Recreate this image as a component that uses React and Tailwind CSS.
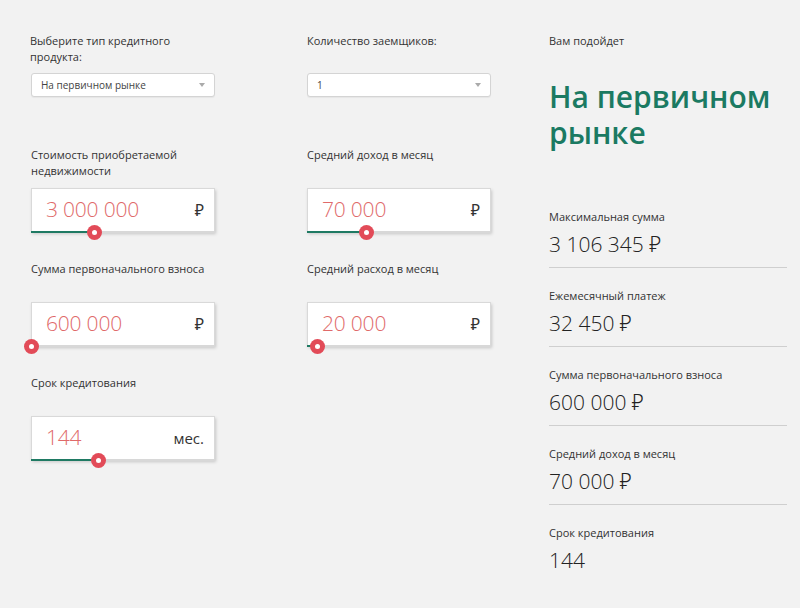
import React from 'react';

const FONT = { fontFamily: '"Open Sans", "Noto Sans", sans-serif' };

const Select = ({ value }) => (
  <div className="h-[24px] w-full bg-white border border-[#d4d4d4] rounded-[3px] flex items-center justify-between pl-[9px] pr-[9px] shadow-[0_1px_1px_rgba(0,0,0,0.05)]">
    <span className="text-[10px] text-[#444]">{value}</span>
    <span className="w-0 h-0 border-l-[3px] border-r-[3px] border-t-[4px] border-l-transparent border-r-transparent border-t-[#aaa]" />
  </div>
);

const Field = ({ label, value, unit, pos, className = '' }) => (
  <div className={className}>
    <div className="h-[32px] text-[11px] leading-[16px] text-[#333]">{label}</div>
    <div className="mt-[9px] h-[44px] w-full bg-white border border-[#d9d9d9] shadow-[1px_2px_3px_rgba(0,0,0,0.18)] flex items-center justify-between pl-[14px] pr-[10px]">
      <span className="text-[21px] font-light text-[#e06a6a] tracking-[-0.2px]">{value}</span>
      <span className={unit === '₽' ? 'text-[16px] text-[#333]' : 'text-[15px] text-[#333]'}>{unit}</span>
    </div>
    {/* slider */}
    <div className="relative h-[2px] w-full bg-[#d8d8d8] -mt-[1px]">
      <div className="h-full bg-[#1f7a63]" style={{ width: pos }} />
      <div
        className="absolute top-[-6px] w-[15px] h-[15px] rounded-full bg-[#e24b58] flex items-center justify-center"
        style={{ left: pos - 7 }}
      >
        <div className="w-[5px] h-[5px] rounded-full bg-white" />
      </div>
    </div>
  </div>
);

const Result = ({ label, value, last }) => (
  <div className={last ? 'pt-[20px]' : 'pt-[20px] pb-[9px] border-b border-[#cfcfcf]'}>
    <div className="text-[11px] leading-[16px] text-[#333]">{label}</div>
    <div className="mt-[5px] text-[21px] leading-[28px] font-light text-[#222]">{value}</div>
  </div>
);

export default function App() {
  return (
    <div className="w-[800px] h-[608px] bg-[#f2f2f2] flex pl-[30px] pt-[33px]" style={FONT}>
      {/* column 1 */}
      <div className="w-[185px] flex flex-col">
        <div className="h-[32px] text-[11px] leading-[16px] text-[#333]">
          Выберите тип кредитного<br />продукта:
        </div>
        <div className="mt-[8px] pl-[1px]">
          <Select value="На первичном рынке" />
        </div>
        <Field className="mt-[50px] pl-[1px]" label={<>Стоимость приобретаемой<br />недвижимости</>} value="3 000 000" unit="₽" pos={63} />
        <Field className="mt-[28px] pl-[1px]" label="Сумма первоначального взноса" value="600 000" unit="₽" pos={0} />
        <Field className="mt-[28px] pl-[1px]" label="Срок кредитования" value="144" unit="мес." pos={67} />
      </div>

      {/* column 2 */}
      <div className="w-[184px] ml-[92px] flex flex-col">
        <div className="h-[32px] text-[11px] leading-[16px] text-[#333]">Количество заемщиков:</div>
        <div className="mt-[8px]">
          <Select value="1" />
        </div>
        <Field className="mt-[50px]" label="Средний доход в месяц" value="70 000" unit="₽" pos={59} />
        <Field className="mt-[28px]" label="Средний расход в месяц" value="20 000" unit="₽" pos={10} />
      </div>

      {/* column 3 */}
      <div className="w-[238px] ml-[58px] flex flex-col">
        <div className="text-[11px] leading-[16px] text-[#333]">Вам подойдет</div>
        <div className="mt-[30px] text-[30px] font-semibold text-[#1b7a62]">
          <div className="h-[36px] leading-[36px]">На первичном</div>
          <div className="h-[36px] leading-[36px]">рынке</div>
        </div>
        <div className="mt-[38px]">
          <Result label="Максимальная сумма" value="3 106 345 ₽" />
          <Result label="Ежемесячный платеж" value="32 450 ₽" />
          <Result label="Сумма первоначального взноса" value="600 000 ₽" />
          <Result label="Средний доход в месяц" value="70 000 ₽" />
          <Result label="Срок кредитования" value="144" last />
        </div>
      </div>
    </div>
  );
}
